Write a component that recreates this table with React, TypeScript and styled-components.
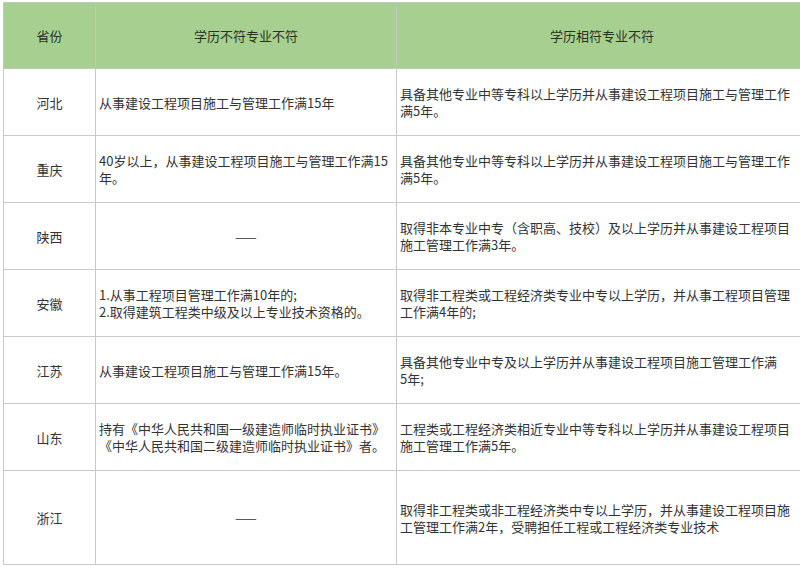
import React from 'react';
import styled, { createGlobalStyle } from 'styled-components';

const GlobalStyle = createGlobalStyle`
  html, body {
    margin: 0;
    padding: 0;
    background: #ffffff;
    overflow: hidden;
  }
  body {
    font-family: "Noto Sans CJK SC", "Noto Sans", sans-serif;
  }
`;

const Page = styled.div`
  width: 800px;
  height: 568px;
  padding: 2px 0 0 3px;
  box-sizing: border-box;
  overflow: hidden;
`;

const Table = styled.table`
  width: 804px;
  table-layout: fixed;
  border-collapse: collapse;
  font-size: 13px;
  line-height: 17px;
  color: #333333;
`;

const HeadRow = styled.tr`
  height: 66px;
  background: #a7cf90;
`;

const Row = styled.tr<{ $tall?: boolean }>`
  height: ${(p) => (p.$tall ? '94px' : '67px')};
`;

const HeadCell = styled.th`
  border: 1px solid #bfc9b8;
  font-weight: 400;
  text-align: center;
  color: #28331f;
  padding: 0;
`;

const Province = styled.td`
  border: 1px solid #c9c9c9;
  text-align: center;
  padding: 0;
`;

const Cell = styled.td<{ $center?: boolean }>`
  border: 1px solid #c9c9c9;
  padding: 0 3px;
  text-align: ${(p) => (p.$center ? 'center' : 'left')};
  white-space: pre-line;
  vertical-align: middle;
`;

type Item = {
  province: string;
  mismatch: string;
  related: string;
  tall?: boolean;
};

const rows: Item[] = [
  {
    province: '河北',
    mismatch: '从事建设工程项目施工与管理工作满15年',
    related: '具备其他专业中等专科以上学历并从事建设工程项目施工与管理工作\n满5年。',
  },
  {
    province: '重庆',
    mismatch: '40岁以上，从事建设工程项目施工与管理工作满15\n年。',
    related: '具备其他专业中等专科以上学历并从事建设工程项目施工与管理工作\n满5年。',
  },
  {
    province: '陕西',
    mismatch: '——',
    related: '取得非本专业中专（含职高、技校）及以上学历并从事建设工程项目\n施工管理工作满3年。',
  },
  {
    province: '安徽',
    mismatch: '1.从事工程项目管理工作满10年的;\n2.取得建筑工程类中级及以上专业技术资格的。',
    related: '取得非工程类或工程经济类专业中专以上学历，并从事工程项目管理\n工作满4年的;',
  },
  {
    province: '江苏',
    mismatch: '从事建设工程项目施工与管理工作满15年。',
    related: '具备其他专业中专及以上学历并从事建设工程项目施工管理工作满\n5年;',
  },
  {
    province: '山东',
    mismatch: '持有《中华人民共和国一级建造师临时执业证书》\n《中华人民共和国二级建造师临时执业证书》者。',
    related: '工程类或工程经济类相近专业中等专科以上学历并从事建设工程项目\n施工管理工作满5年。',
  },
  {
    province: '浙江',
    mismatch: '——',
    related: '取得非工程类或非工程经济类中专以上学历，并从事建设工程项目施\n工管理工作满2年，受聘担任工程或工程经济类专业技术',
    tall: true,
  },
];

const App: React.FC = () => {
  return (
    <>
      <GlobalStyle />
      <Page>
        <Table>
          <colgroup>
            <col style={{ width: 92 }} />
            <col style={{ width: 301 }} />
            <col style={{ width: 411 }} />
          </colgroup>
          <thead>
            <HeadRow>
              <HeadCell>省份</HeadCell>
              <HeadCell>学历不符专业不符</HeadCell>
              <HeadCell>学历相符专业不符</HeadCell>
            </HeadRow>
          </thead>
          <tbody>
            {rows.map((r) => (
              <Row key={r.province} $tall={r.tall}>
                <Province>{r.province}</Province>
                <Cell $center={r.mismatch === '——'}>{r.mismatch}</Cell>
                <Cell>{r.related}</Cell>
              </Row>
            ))}
          </tbody>
        </Table>
      </Page>
    </>
  );
};

export default App;
